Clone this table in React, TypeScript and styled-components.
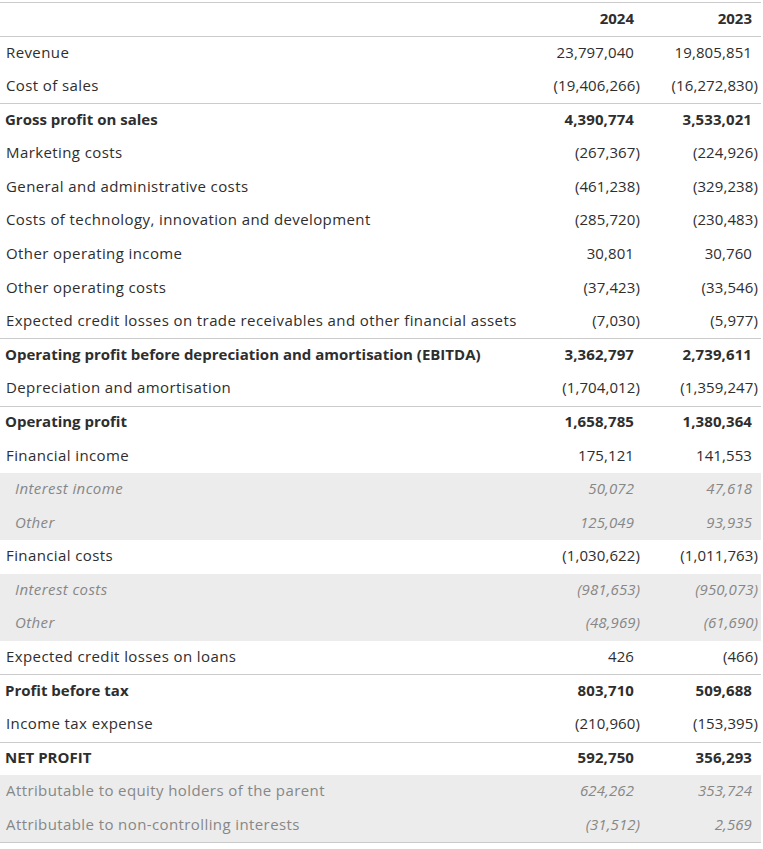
import React from "react";
import styled, { createGlobalStyle } from "styled-components";

const Global = createGlobalStyle`
  html, body { margin: 0; padding: 0; background: #fff; }
  body { font-family: "Open Sans", Lato, sans-serif; color: #2e2e2e; }
`;

type Kind = "normal" | "bold" | "sub" | "attr";
type Row = { label: string; a: string; b: string; kind: Kind; top?: boolean };

const rows: Row[] = [
  { label: "Revenue", a: "23,797,040", b: "19,805,851", kind: "normal", top: true },
  { label: "Cost of sales", a: "(19,406,266)", b: "(16,272,830)", kind: "normal" },
  { label: "Gross profit on sales", a: "4,390,774", b: "3,533,021", kind: "bold", top: true },
  { label: "Marketing costs", a: "(267,367)", b: "(224,926)", kind: "normal" },
  { label: "General and administrative costs", a: "(461,238)", b: "(329,238)", kind: "normal" },
  { label: "Costs of technology, innovation and development", a: "(285,720)", b: "(230,483)", kind: "normal" },
  { label: "Other operating income", a: "30,801", b: "30,760", kind: "normal" },
  { label: "Other operating costs", a: "(37,423)", b: "(33,546)", kind: "normal" },
  { label: "Expected credit losses on trade receivables and other financial assets", a: "(7,030)", b: "(5,977)", kind: "normal" },
  { label: "Operating profit before depreciation and amortisation (EBITDA)", a: "3,362,797", b: "2,739,611", kind: "bold", top: true },
  { label: "Depreciation and amortisation", a: "(1,704,012)", b: "(1,359,247)", kind: "normal" },
  { label: "Operating profit", a: "1,658,785", b: "1,380,364", kind: "bold", top: true },
  { label: "Financial income", a: "175,121", b: "141,553", kind: "normal" },
  { label: "Interest income", a: "50,072", b: "47,618", kind: "sub" },
  { label: "Other", a: "125,049", b: "93,935", kind: "sub" },
  { label: "Financial costs", a: "(1,030,622)", b: "(1,011,763)", kind: "normal" },
  { label: "Interest costs", a: "(981,653)", b: "(950,073)", kind: "sub" },
  { label: "Other", a: "(48,969)", b: "(61,690)", kind: "sub" },
  { label: "Expected credit losses on loans", a: "426", b: "(466)", kind: "normal" },
  { label: "Profit before tax", a: "803,710", b: "509,688", kind: "bold", top: true },
  { label: "Income tax expense", a: "(210,960)", b: "(153,395)", kind: "normal" },
  { label: "NET PROFIT", a: "592,750", b: "356,293", kind: "bold", top: true },
  { label: "Attributable to equity holders of the parent", a: "624,262", b: "353,724", kind: "attr" },
  { label: "Attributable to non-controlling interests", a: "(31,512)", b: "2,569", kind: "attr" },
];

const LINE = "1.5px solid #cbcbcb";

const Page = styled.div`
  padding-top: 1.5px;
  width: 761px;
`;

const Table = styled.div`
  display: grid;
  grid-template-columns: 1fr 123px 118px;
  border-top: ${LINE};
  border-bottom: ${LINE};
`;

const RowBox = styled.div<{ $kind: Kind; $top?: boolean }>`
  display: contents;
  & > div {
    height: 33.6px;
    box-sizing: border-box;
    padding-bottom: 3px;
    display: flex;
    align-items: center;
    background: ${(p) => (p.$kind === "sub" || p.$kind === "attr" ? "#ececec" : "#fff")};
    border-top: ${(p) => (p.$top ? LINE : "none")};
    font-size: 15px;
    font-weight: ${(p) => (p.$kind === "bold" ? 700 : 400)};
    letter-spacing: ${(p) => (p.$kind === "bold" ? "0" : "0.4px")};
    color: ${(p) => (p.$kind === "sub" || p.$kind === "attr" ? "#878787" : "#2e2e2e")};
  }
`;

const Label = styled.div<{ $kind: Kind }>`
  padding-left: ${(p) => (p.$kind === "sub" ? "15px" : p.$kind === "bold" ? "5px" : "6px")};
  font-style: ${(p) => (p.$kind === "sub" ? "italic" : "normal")};
  white-space: nowrap;
`;

const Num = styled.div<{ $kind: Kind }>`
  justify-content: flex-end;
  padding-right: 9px;
  font-style: ${(p) => (p.$kind === "sub" || p.$kind === "attr" ? "italic" : "normal")};
  white-space: nowrap;
  && {
    letter-spacing: ${(p) => (p.$kind === "bold" ? "0.1px" : "0.1px")};
  }
`;

const Hang = styled.span`
  margin-right: -6px;
`;

const HeadCell = styled.div`
  height: 33.6px;
  box-sizing: border-box;
  padding-bottom: 3px;
  display: flex;
  align-items: center;
  justify-content: flex-end;
  padding-right: 9px;
  font-size: 15px;
  font-weight: 700;
  color: #2e2e2e;
`;

const Blank = styled.div`
  height: 33.6px;
`;

function Value({ v }: { v: string }) {
  if (v.startsWith("(")) {
    return (
      <>
        {v.slice(0, -1)}
        <Hang>)</Hang>
      </>
    );
  }
  return <>{v}</>;
}

export default function App() {
  return (
    <Page>
      <Global />
      <Table>
        <Blank />
        <HeadCell>2024</HeadCell>
        <HeadCell>2023</HeadCell>
        {rows.map((r, i) => (
          <RowBox key={i} $kind={r.kind} $top={r.top}>
            <Label $kind={r.kind}>{r.label}</Label>
            <Num $kind={r.kind}>
              <Value v={r.a} />
            </Num>
            <Num $kind={r.kind}>
              <Value v={r.b} />
            </Num>
          </RowBox>
        ))}
      </Table>
    </Page>
  );
}
